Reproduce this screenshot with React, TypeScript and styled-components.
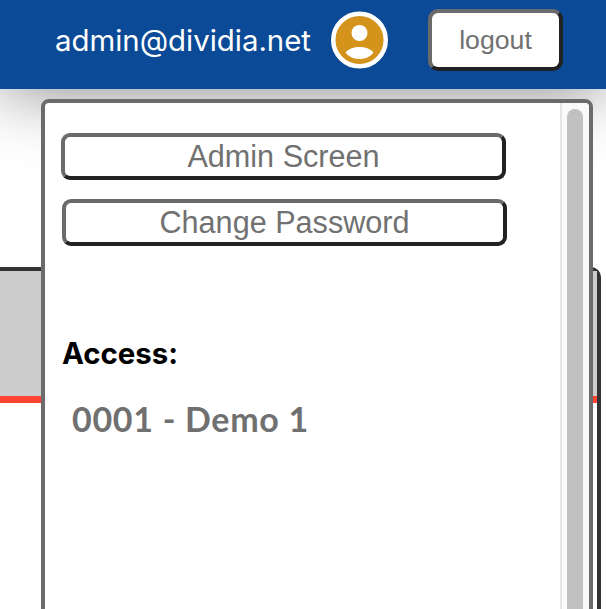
import React from 'react'
import styled, { createGlobalStyle } from 'styled-components'

const GlobalStyle = createGlobalStyle`
  html, body {
    margin: 0;
    padding: 0;
    background: white;
    font-family: 'Liberation Sans', Arial, sans-serif;
  }
`

const Page = styled.div`
  position: relative;
  width: 606px;
  height: 609px;
  overflow: hidden;
`

const Header = styled.header`
  position: relative;
  z-index: 1;
  box-sizing: border-box;
  height: 89px;
  padding: 0 43px 9px 0;
  display: flex;
  align-items: center;
  justify-content: flex-end;
  background-color: #0b4a96;
  box-shadow: 0 0 70px rgba(0, 0, 0, 0.5);
`

const Email = styled.span`
  font-family: Inter, sans-serif;
  font-size: 29.4px;
  color: white;
  margin-right: 20px;
`

const Avatar = styled.div`
  width: 57px;
  height: 58px;
  margin-right: 40px;

  & svg {
    display: block;
  }
`

const raised = `
  box-sizing: border-box;
  background: white;
  color: #717171;
  font-family: 'Liberation Sans', Arial, sans-serif;
  border-style: solid;
  border-width: 4px;
  border-color: #6b6b6b #222 #222 #6b6b6b;
  padding: 0;
`

const LogoutButton = styled.button`
  ${raised}
  width: 135px;
  height: 62px;
  font-size: 26.7px;
  border-radius: 10px;
`

const Backdrop = styled.section`
  box-sizing: border-box;
  margin: 178px 5px 0 -10px;
  height: 360px;
  border: 4px solid #333;
  border-radius: 10px;
`

const BackdropBand = styled.div`
  height: 125px;
  background: #ccc;
  border-bottom: 7px solid #ff4433;
`

const Menu = styled.aside`
  position: absolute;
  z-index: 2;
  top: 99px;
  left: 41px;
  box-sizing: border-box;
  width: 552px;
  height: 530px;
  display: flex;
  background: white;
  border: 4px solid #6b6b6b;
  border-radius: 8px;
`

const MenuContent = styled.div`
  flex: 1;
  min-width: 0;
  padding: 30px 54px 0 16px;
`

const MenuButton = styled.button<{ $nudge?: number }>`
  ${raised}
  display: block;
  width: 445px;
  height: 47px;
  margin-left: ${(p) => p.$nudge ?? 0}px;
  margin-bottom: 19px;
  font-size: 30.6px;
  line-height: 1;
  border-radius: 9px;
`

const AccessLabel = styled.h3`
  margin: 91px 0 0 1px;
  font-family: Inter, sans-serif;
  font-size: 29.4px;
  line-height: 34px;
  font-weight: 700;
  color: black;
`

const AccessItem = styled.div`
  margin: 28px 0 0 11px;
  font-family: Lato, sans-serif;
  font-size: 34px;
  line-height: 40px;
  font-weight: 700;
  letter-spacing: 0.7px;
  color: #707070;
`

const ScrollTrack = styled.div`
  box-sizing: border-box;
  flex: none;
  width: 29px;
  padding: 6px 6px 0 5px;
  background: #fafafa;
  border-left: 2px solid #e6e6e6;
  border-top-right-radius: 4px;
`

const ScrollThumb = styled.div`
  width: 16px;
  height: 600px;
  border-radius: 8px;
  background: #c1c1c1;
`

const UserIcon = () => (
  <svg width="57" height="58" viewBox="0 0 57 58">
    <circle cx="28.5" cy="29" r="26.25" fill="#d4941c" stroke="white" strokeWidth="4.5" />
    <circle cx="28.5" cy="22" r="8" fill="white" />
    <path d="M14.5 41.5 C18 37.5 23 36 28.5 36 C34 36 39 37.5 42.5 41.5 C39 46 34 48 28.5 48 C23 48 18 46 14.5 41.5 Z" fill="white" />
  </svg>
)

const App: React.FC = () => {
  return (
    <Page>
      <GlobalStyle />
      <Header>
        <Email>admin@dividia.net</Email>
        <Avatar>
          <UserIcon />
        </Avatar>
        <LogoutButton>logout</LogoutButton>
      </Header>
      <Backdrop>
        <BackdropBand />
      </Backdrop>
      <Menu>
        <MenuContent>
          <MenuButton>Admin Screen</MenuButton>
          <MenuButton $nudge={1}>Change Password</MenuButton>
          <AccessLabel>Access:</AccessLabel>
          <AccessItem>0001 - Demo 1</AccessItem>
        </MenuContent>
        <ScrollTrack>
          <ScrollThumb />
        </ScrollTrack>
      </Menu>
    </Page>
  )
}

export default App
